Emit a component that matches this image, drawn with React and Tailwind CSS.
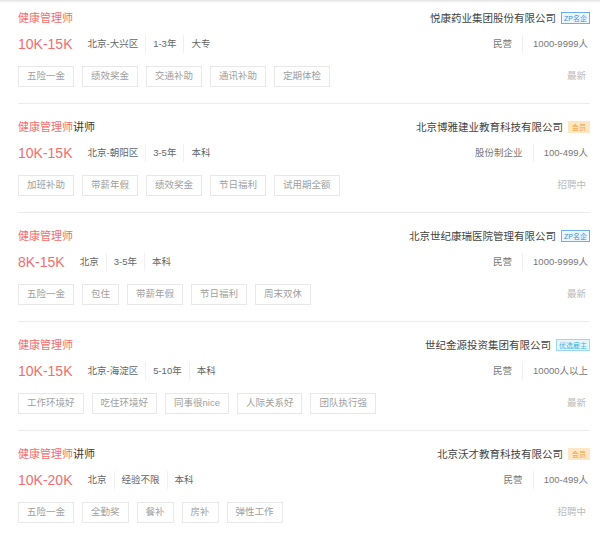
import React from "react";

const jobs = [
  {
    title: "健康管理师",
    suffix: "",
    salary: "10K-15K",
    info: ["北京-大兴区", "1-3年", "大专"],
    tags: ["五险一金", "绩效奖金", "交通补助", "通讯补助", "定期体检"],
    company: "悦康药业集团股份有限公司",
    badge: "zp",
    kind: "民营",
    size: "1000-9999人",
    status: "最新",
  },
  {
    title: "健康管理师",
    suffix: "讲师",
    salary: "10K-15K",
    info: ["北京-朝阳区", "3-5年", "本科"],
    tags: ["加班补助", "带薪年假", "绩效奖金", "节日福利", "试用期全额"],
    company: "北京博雅建业教育科技有限公司",
    badge: "vip",
    kind: "股份制企业",
    size: "100-499人",
    status: "招聘中",
  },
  {
    title: "健康管理师",
    suffix: "",
    salary: "8K-15K",
    info: ["北京", "3-5年", "本科"],
    tags: ["五险一金", "包住", "带薪年假", "节日福利", "周末双休"],
    company: "北京世纪康瑞医院管理有限公司",
    badge: "zp",
    kind: "民营",
    size: "1000-9999人",
    status: "最新",
  },
  {
    title: "健康管理师",
    suffix: "",
    salary: "10K-15K",
    info: ["北京-海淀区", "5-10年", "本科"],
    tags: ["工作环境好", "吃住环境好", "同事很nice", "人际关系好", "团队执行强"],
    company: "世纪金源投资集团有限公司",
    badge: "best",
    kind: "民营",
    size: "10000人以上",
    status: "最新",
  },
  {
    title: "健康管理师",
    suffix: "讲师",
    salary: "10K-20K",
    info: ["北京", "经验不限", "本科"],
    tags: ["五险一金", "全勤奖", "餐补", "房补", "弹性工作"],
    company: "北京沃才教育科技有限公司",
    badge: "vip",
    kind: "民营",
    size: "100-499人",
    status: "招聘中",
  },
];

function Badge({ type }) {
  if (type === "zp") {
    return (
      <span className="ml-[5px] flex h-[12px] items-center border border-[#6eb0e6] bg-[#eef6fd] px-[2px] text-[7px] leading-none text-[#3d8fd8]">
        ZP名企
      </span>
    );
  }
  if (type === "vip") {
    return (
      <span className="ml-[5px] flex h-[12px] items-center bg-[#fde7c4] px-[4px] text-[7px] leading-none text-[#f2a138]">
        会员
      </span>
    );
  }
  return (
    <span className="ml-[5px] flex h-[12px] items-center border border-[#9dd8ec] bg-[#e4f6fc] px-[2px] text-[7px] leading-none text-[#3fb2dc]">
      优选雇主
    </span>
  );
}

function JobCard({ job, first }) {
  return (
    <div className={`ml-[18px] mr-[10px] border-b border-[#ececec] pb-[17px] ${first ? "pt-[7px]" : "pt-[15px]"}`}>
      <div className="flex h-4 items-center justify-between">
        <div className="text-[11px] leading-4">
          <span className="text-[#f36d6d]">{job.title}</span>
          <span className="text-[#3a3a3a]">{job.suffix}</span>
        </div>
        <div className="flex items-center">
          <span className="text-[10.5px] leading-4 text-[#444]">{job.company}</span>
          <Badge type={job.badge} />
        </div>
      </div>

      <div className="mt-2 flex h-5 items-center justify-between">
        <div className="flex items-center">
          <span className="mr-[15px] text-[14px] leading-5 text-[#f36d6d]">{job.salary}</span>
          {job.info.map((t, i) => (
            <React.Fragment key={t + i}>
              {i > 0 && <span className="mx-[7px] h-[18px] w-px bg-[#f0f0f0]" />}
              <span className="text-[9.5px] text-[#666]">{t}</span>
            </React.Fragment>
          ))}
        </div>
        <div className="flex items-center pr-[2px] text-[9.5px] text-[#777]">
          <span>{job.kind}</span>
          <span className="mx-[10px] h-[18px] w-px bg-[#f0f0f0]" />
          <span>{job.size}</span>
        </div>
      </div>

      <div className="mt-3 flex h-5 items-center justify-between">
        <div className="flex gap-2">
          {job.tags.map((t) => (
            <span
              key={t}
              className="flex h-[21px] items-center border border-[#e8e8e8] px-[8px] text-[9.5px] text-[#a0a0a0]"
            >
              {t}
            </span>
          ))}
        </div>
        <span className="pr-[4px] text-[9.5px] text-[#bbb]">{job.status}</span>
      </div>
    </div>
  );
}

export default function App() {
  return (
    <div
      className="h-[537px] w-[600px] overflow-hidden bg-white"
      style={{ fontFamily: '"Liberation Sans", "Noto Sans CJK SC", sans-serif' }}
    >
      <div className="h-[3px] bg-gradient-to-b from-[#e2e2e2] to-white" />
      {jobs.map((job, i) => (
        <JobCard key={i} job={job} first={i === 0} />
      ))}
    </div>
  );
}
